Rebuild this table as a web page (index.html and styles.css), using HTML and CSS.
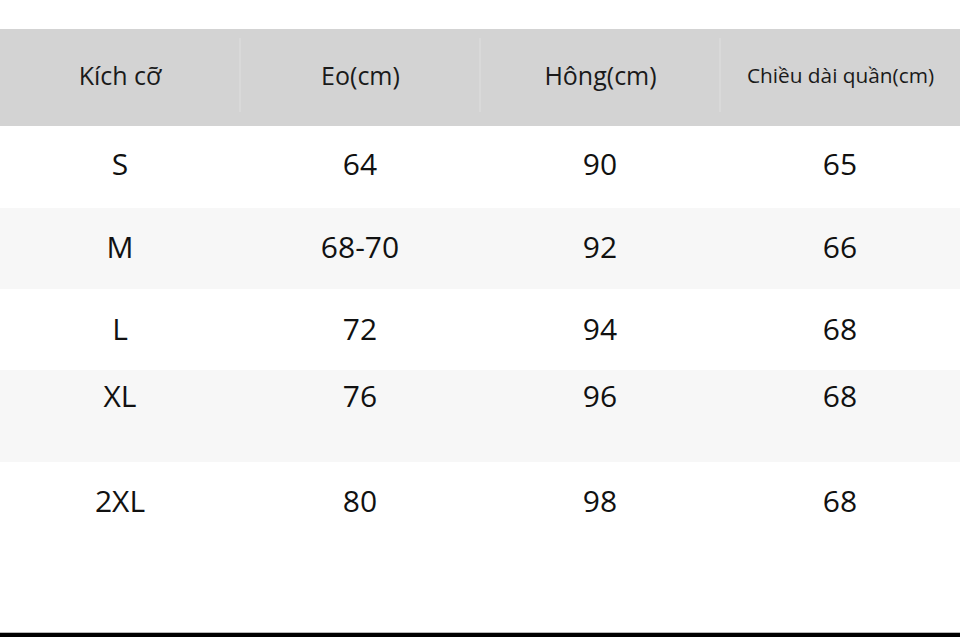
FILE: index.html
```html
<!DOCTYPE html>
<html lang="vi">
<head>
<meta charset="utf-8">
<title>Bảng kích cỡ</title>
<link rel="stylesheet" href="styles.css">
</head>
<body>
<div class="page">
  <div class="top-space"></div>
  <div class="size-table">
    <div class="row head">
      <div class="cell">Kích cỡ</div>
      <div class="cell div">Eo(cm)</div>
      <div class="cell div">Hông(cm)</div>
      <div class="cell div small">Chiều dài quần(cm)</div>
    </div>
    <div class="row r1">
      <div class="cell">S</div><div class="cell">64</div><div class="cell">90</div><div class="cell">65</div>
    </div>
    <div class="row r2 alt">
      <div class="cell">M</div><div class="cell">68-70</div><div class="cell">92</div><div class="cell">66</div>
    </div>
    <div class="row r3">
      <div class="cell">L</div><div class="cell">72</div><div class="cell">94</div><div class="cell">68</div>
    </div>
    <div class="row r4 alt">
      <div class="cell">XL</div><div class="cell">76</div><div class="cell">96</div><div class="cell">68</div>
    </div>
    <div class="row r5">
      <div class="cell">2XL</div><div class="cell">80</div><div class="cell">98</div><div class="cell">68</div>
    </div>
  </div>
  <div class="bottom-line"></div>
  <div class="bottom-bar"></div>
</div>
</body>
</html>
```
FILE: styles.css
```css
html, body {
  margin: 0;
  padding: 0;
  background: #ffffff;
}
body {
  font-family: "Open Sans", "Noto Sans", "Liberation Sans", sans-serif;
  color: #111111;
  width: 960px;
  height: 637px;
  overflow: hidden;
}
.page {
  display: flex;
  flex-direction: column;
  height: 637px;
}
.top-space {
  height: 29px;
}
.size-table {
  display: flex;
  flex-direction: column;
}
.row {
  display: grid;
  grid-template-columns: 240px 240px 240px 240px;
  font-size: 30px;
  line-height: 40px;
  box-sizing: border-box;
}
.row .cell {
  text-align: center;
}
.head {
  height: 97px;
  background: #d3d3d3;
  font-size: 25px;
  line-height: 34px;
  color: #1a1a1a;
  align-items: stretch;
}
.head .cell {
  display: flex;
  align-items: center;
  justify-content: center;
  margin-top: 9px;
  margin-bottom: 14px;
  padding-top: 0;
}
.head .cell.div {
  border-left: 2px solid #d9d9d9;
  margin-left: -1px;
}
.head .cell.small {
  font-size: 20.8px;
  white-space: nowrap;
}
.alt {
  background: #f7f7f7;
}
.r1 { height: 82px; padding-top: 18px; }
.r2 { height: 81px; padding-top: 19px; }
.r3 { height: 81px; padding-top: 20px; }
.r4 { height: 92px; padding-top: 6px; }
.r5 { height: 170px; padding-top: 19px; }
.bottom-line {
  height: 1px;
  background: #b8b8b8;
}
.bottom-bar {
  height: 4px;
  background: #000000;
}
```
